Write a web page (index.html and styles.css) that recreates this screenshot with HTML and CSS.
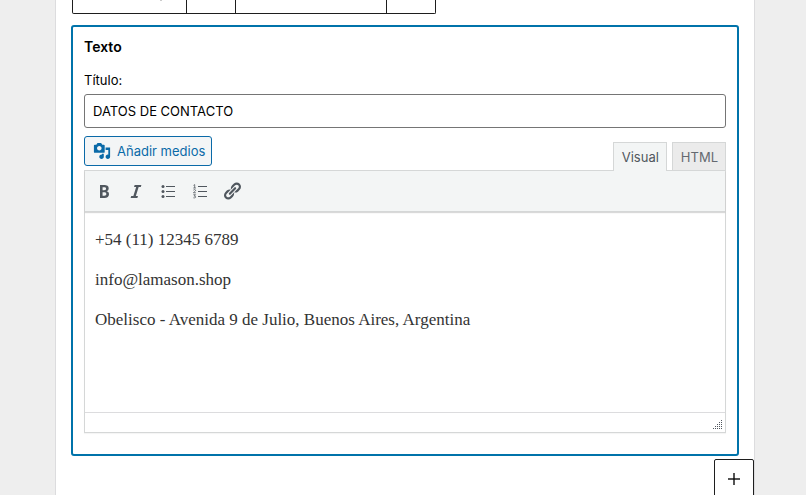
FILE: index.html
```
<!DOCTYPE html>
<html lang="es">
<head>
<meta charset="utf-8">
<title>Widgets</title>
<link rel="stylesheet" href="styles.css">
</head>
<body>
<main class="area">
  <div class="block-toolbar" role="toolbar" aria-label="Herramientas de bloque">
    <div class="group group-wide"><svg width="4" height="1" viewBox="0 0 4 1" aria-hidden="true"><path fill="#ccc" d="M1 0h2v1H1z"/></svg></div>
    <div class="group"></div>
    <div class="group group-move"></div>
    <div class="group"></div>
  </div>
  <section class="widget">
    <h2 class="widget-title">Texto</h2>
    <label class="field-label" for="title">Título:</label>
    <input class="field" id="title" type="text" value="DATOS DE CONTACTO">
    <div class="tools">
      <button class="media" type="button">
        <svg width="18" height="18" viewBox="0 0 20 20" aria-hidden="true"><path fill="currentColor" d="M13 11V4c0-.55-.45-1-1-1h-1.670L9 1H5L3.670 3H2c-.55 0-1 .45-1 1v7c0 .55.45 1 1 1h10c.55 0 1-.45 1-1zM7 4.500c1.380 0 2.500 1.120 2.500 2.500S8.380 9.500 7 9.500 4.500 8.380 4.500 7 5.620 4.500 7 4.500zM14 6h5v10.500c0 1.380-1.120 2.500-2.500 2.500S14 17.880 14 16.500s1.120-2.500 2.500-2.500c.17 0 .34.020.5.050V9h-3V6zm-4 8.050V13h2v3.500c0 1.380-1.120 2.500-2.500 2.500S7 17.880 7 16.500 8.120 14 9.500 14c.17 0 .34.020.5.050z"/></svg>
        Añadir medios
      </button>
      <div class="tabs">
        <button class="tab tab-active" type="button">Visual</button>
        <button class="tab" type="button">HTML</button>
      </div>
    </div>
    <div class="editor">
      <div class="format-bar" role="toolbar" aria-label="Formato">
        <button class="format" type="button" aria-label="Negrita"><svg width="20" height="20" viewBox="0 0 20 20"><path fill="currentColor" d="M6 4v13h4.540c1.370 0 2.460-.33 3.260-1 .8-.66 1.200-1.580 1.200-2.770 0-.84-.17-1.510-.51-2.010s-.9-.85-1.670-1.030v-.09c.57-.1 1.020-.4 1.360-.9s.51-1.130.51-1.910c0-1.140-.39-1.980-1.170-2.500C12.750 4.260 11.500 4 9.780 4H6zm2.570 5.150V6.260h1.360c.73 0 1.270.11 1.610.32.34.22.51.58.51 1.070 0 .54-.16.92-.47 1.150s-.82.35-1.510.35h-1.500zm0 2.190h1.600c1.440 0 2.160.53 2.160 1.610 0 .6-.17 1.050-.51 1.340s-.86.43-1.570.43H8.570v-3.380z"/></svg></button>
        <button class="format" type="button" aria-label="Cursiva"><svg width="20" height="20" viewBox="0 0 20 20"><path fill="currentColor" d="M14.780 6h-2.130l-2.800 9h2.120l-.62 2H4.600l.62-2h2.140l2.800-9H8.030l.62-2h6.750z"/></svg></button>
        <button class="format" type="button" aria-label="Lista con viñetas"><svg width="20" height="20" viewBox="0 0 20 20"><g fill="currentColor"><circle cx="5" cy="5.500" r="1.500"/><circle cx="5" cy="10.500" r="1.500"/><circle cx="5" cy="15.500" r="1.500"/><path d="M8 5h9v1H8zM8 10h9v1H8zM8 15h9v1H8z"/></g></svg></button>
        <button class="format" type="button" aria-label="Lista numerada"><svg width="20" height="20" viewBox="0 0 20 20"><path fill="currentColor" d="M8 5h9v1H8zM8 10h9v1H8zM8 15h9v1H8z"/><path fill="none" stroke="currentColor" stroke-width=".8" d="M3.500 4.400l1.200-.8V7M3.300 7h2.600M3.400 9.200c.5-.9 2.200-.8 2.200.2 0 .9-1.500 1.300-2.200 2.400h2.500M3.400 13.700h2.100l-1.300 1.400c2.200-.2 2.100 2.300-.8 1.700"/></svg></button>
        <button class="format" type="button" aria-label="Insertar enlace"><svg width="20" height="20" viewBox="0 0 20 20"><path fill="currentColor" d="M17.740 2.760c1.680 1.690 1.680 4.410 0 6.100l-1.530 1.520c-1.120 1.120-2.700 1.470-4.140 1.090l2.620-2.610.76-.77.760-.76c.84-.84.84-2.200 0-3.040-.84-.85-2.200-.85-3.040 0l-.77.760-3.380 3.380c-.37-1.440-.02-3.020 1.100-4.140l1.520-1.530c1.690-1.680 4.420-1.680 6.100 0zM8.590 13.430l5.340-5.340c.42-.42.42-1.100 0-1.520-.44-.43-1.130-.39-1.530 0l-5.330 5.340c-.42.42-.42 1.100 0 1.520.44.430 1.130.390 1.520 0zm-.76 2.290l4.140-4.150c.38 1.440.03 3.020-1.090 4.140l-1.520 1.530c-1.690 1.680-4.410 1.680-6.100 0-1.680-1.680-1.680-4.420 0-6.100l1.530-1.520c1.120-1.120 2.700-1.470 4.140-1.100l-4.140 4.150c-.85.84-.85 2.200 0 3.050.84.840 2.200.840 3.040 0z"/></svg></button>
      </div>
      <div class="content" contenteditable="true" spellcheck="false" role="textbox" aria-label="Contenido">
        <p>+54 (11) 12345 6789</p>
        <p>info@lamason.shop</p>
        <p>Obelisco - Avenida 9 de Julio, Buenos Aires, Argentina</p>
      </div>
      <div class="status"><svg width="10" height="10" viewBox="0 0 10 10" shape-rendering="crispEdges" aria-hidden="true"><path fill="#50575e" d="M8 0h1v1H8zM6 2h1v1H6zM8 2h1v1H8zM4 4h1v1H4zM6 4h1v1H6zM8 4h1v1H8zM2 6h1v1H2zM4 6h1v1H4zM6 6h1v1H6zM8 6h1v1H8zM0 8h1v1H0zM2 8h1v1H2zM4 8h1v1H4zM6 8h1v1H6zM8 8h1v1H8z"/></svg></div>
    </div>
  </section>
  <button class="add" type="button" aria-label="Añadir bloque"><svg width="12" height="12" viewBox="0 0 12 12" shape-rendering="crispEdges"><path fill="#555" d="M5 0h2v5h5v2H7v5H5V7H0V5h5z"/><path fill="#1e1e1e" d="M5 5h2v2H5z"/></svg></button>
</main>
</body>
</html>
```
FILE: styles.css
```
* { box-sizing: border-box; }
body {
  margin: 0;
  background: #eee;
  color: #000;
  font: 13px/20px Inter, "Liberation Sans", sans-serif;
  overflow: hidden;
}
button, input { font: inherit; margin: 0; }
svg { display: block; }
.area {
  display: flex;
  flex-direction: column;
  min-height: 100vh;
  margin: 0 51px 0 55px;
  border: solid #dcdcde;
  border-width: 0 1px;
  background: #fff;
}
.block-toolbar {
  display: flex;
  align-self: flex-start;
  height: 14px;
  margin: 0 16px 11px;
  border: 1px solid #1e1e1e;
  border-top: 0;
  border-radius: 0 0 2px 2px;
}
.group { width: 49px; border-right: 1px solid #1e1e1e; }
.group:last-child { width: 48px; border-right: 0; }
.group-wide { width: 114px; padding-left: 86px; }
.group-move { width: 151px; }
.widget {
  margin: 0 15px 3px;
  padding: 11px 11px 21px;
  border: 2px solid #0073aa;
  border-radius: 3px;
}
.widget-title {
  margin: 0 0 14px;
  font-size: 14px;
  line-height: 18px;
  font-weight: 600;
}
.field-label { display: block; margin-bottom: 4px; }
.field {
  display: block;
  width: 100%;
  height: 34px;
  padding: 0 8px;
  border: 1px solid #757575;
  border-radius: 3px;
  background: #fff;
  color: #000;
}
.tools {
  display: flex;
  justify-content: space-between;
  align-items: flex-start;
  padding-top: 8px;
}
.media {
  display: flex;
  align-items: center;
  gap: 6px;
  height: 30px;
  margin-bottom: 4px;
  padding: 0 6px 0 8px;
  border: 1px solid #0a6aa8;
  border-radius: 3px;
  background: #f3f5f6;
  color: #0a6aa8;
}
.tabs { display: flex; align-self: flex-end; gap: 5px; }
.tab {
  height: 28px;
  padding: 0 7px 0 8px;
  border: 1px solid #d5d7d7;
  border-bottom: 0;
  background: #ebebeb;
  color: #646970;
}
.tab-active {
  z-index: 1;
  height: 29px;
  margin-bottom: -1px;
  background: #f3f5f5;
  color: #50575e;
}
.editor {
  border: 1px solid #d5d7d7;
  box-shadow: 0 1px 1px rgba(0, 0, 0, .04);
}
.format-bar {
  display: flex;
  gap: 4px;
  padding: 6px 5px;
  border-bottom: 1px solid #d5d7d7;
  box-shadow: 0 1px 1px rgba(0, 0, 0, .15);
  background: #f3f5f5;
}
.format {
  display: grid;
  place-items: center;
  width: 28px;
  height: 28px;
  padding: 0;
  border: 0;
  background: none;
  color: #50575e;
}
.content {
  min-height: 200px;
  padding: 16px 10px;
  outline: 0;
  color: #333;
  font: 17px/24px Georgia, "Liberation Serif", serif;
}
.content p { margin: 0 0 16px; }
.status {
  display: flex;
  justify-content: flex-end;
  align-items: flex-end;
  height: 20px;
  padding: 0 2px 2px;
  border-top: 1px solid #dcdcde;
}
.add {
  display: grid;
  place-items: center;
  align-self: flex-end;
  width: 40px;
  height: 40px;
  padding: 0;
  border: 1px solid #1e1e1e;
  border-radius: 2px;
  background: #fff;
}
```
